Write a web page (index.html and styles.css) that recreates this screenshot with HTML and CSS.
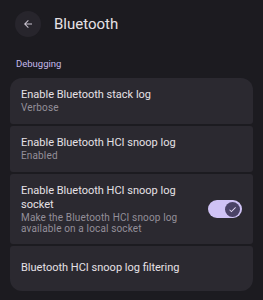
FILE: index.html
```html
<!DOCTYPE html>
<html>
<head>
<meta charset="utf-8">
<link rel="stylesheet" href="styles.css">
</head>
<body>
<div class="page">
  <header class="topbar">
    <button class="back" aria-label="Back">
      <svg width="12" height="12" viewBox="0 0 24 24"><path d="M20 11H7.83l5.59-5.59L12 4l-8 8 8 8 1.41-1.41L7.83 13H20v-2z" fill="#cac4d0"/></svg>
    </button>
    <h1 class="title">Bluetooth</h1>
  </header>
  <div class="section-label">Debugging</div>
  <div class="group">
    <div class="item">
      <div class="texts">
        <div class="item-title">Enable Bluetooth stack log</div>
        <div class="item-sub">Verbose</div>
      </div>
    </div>
    <div class="item">
      <div class="texts">
        <div class="item-title">Enable Bluetooth HCI snoop log</div>
        <div class="item-sub">Enabled</div>
      </div>
    </div>
    <div class="item item-switch">
      <div class="texts">
        <div class="item-title">Enable Bluetooth HCI snoop log socket</div>
        <div class="item-sub">Make the Bluetooth HCI snoop log available on a local socket</div>
      </div>
      <div class="switch">
        <div class="thumb">
          <svg width="9" height="9" viewBox="0 0 24 24"><path d="M9 16.2L4.8 12l-1.4 1.4L9 19 21 7l-1.4-1.4L9 16.2z" fill="#e8def8"/></svg>
        </div>
      </div>
    </div>
    <div class="item item-single">
      <div class="texts">
        <div class="item-title">Bluetooth HCI snoop log filtering</div>
      </div>
    </div>
  </div>
</div>
</body>
</html>
```
FILE: styles.css
```css
html, body {
  margin: 0;
  padding: 0;
  background: #1c1b20;
  font-family: Roboto, "Noto Sans", sans-serif;
}
.page {
  width: 263px;
  height: 300px;
  overflow: hidden;
}
.topbar {
  display: flex;
  align-items: center;
  gap: 13px;
  padding: 11px 0 0 15px;
  height: 26px;
}
.back {
  width: 26px;
  height: 26px;
  border-radius: 50%;
  border: none;
  padding: 0;
  background: #27252c;
  display: flex;
  align-items: center;
  justify-content: center;
}
.title {
  margin: 0;
  font-size: 15px;
  font-weight: 400;
  color: #e6e1e6;
}
.section-label {
  margin: 21px 0 0 16px;
  font-size: 9.5px;
  line-height: 12px;
  color: #c3b9ea;
}
.group {
  margin: 8px 10px 0 10px;
  display: flex;
  flex-direction: column;
  gap: 2px;
}
.item {
  background: #2b2930;
  border-radius: 3px;
  padding: 10px 11px 11px 11px;
  display: flex;
  align-items: center;
  gap: 14px;
}
.item:first-child {
  border-radius: 12px 12px 3px 3px;
}
.item:last-child {
  border-radius: 3px 3px 12px 12px;
}
.item-switch {
  padding-bottom: 10px;
}
.texts {
  flex: 1;
  min-width: 0;
}
.item-title {
  font-size: 11px;
  line-height: 14px;
  color: #e6e1e6;
}
.item-sub {
  font-size: 10px;
  line-height: 11px;
  letter-spacing: 0.15px;
  color: #938f99;
}
.item-single {
  min-height: 24px;
}
.switch {
  width: 34px;
  height: 18px;
  border-radius: 9px;
  background: #cfc2f5;
  display: flex;
  align-items: center;
  justify-content: flex-end;
  padding: 0 2px;
  box-sizing: border-box;
  flex-shrink: 0;
}
.thumb {
  width: 15px;
  height: 15px;
  border-radius: 50%;
  background: #4a4266;
  display: flex;
  align-items: center;
  justify-content: center;
}
```
